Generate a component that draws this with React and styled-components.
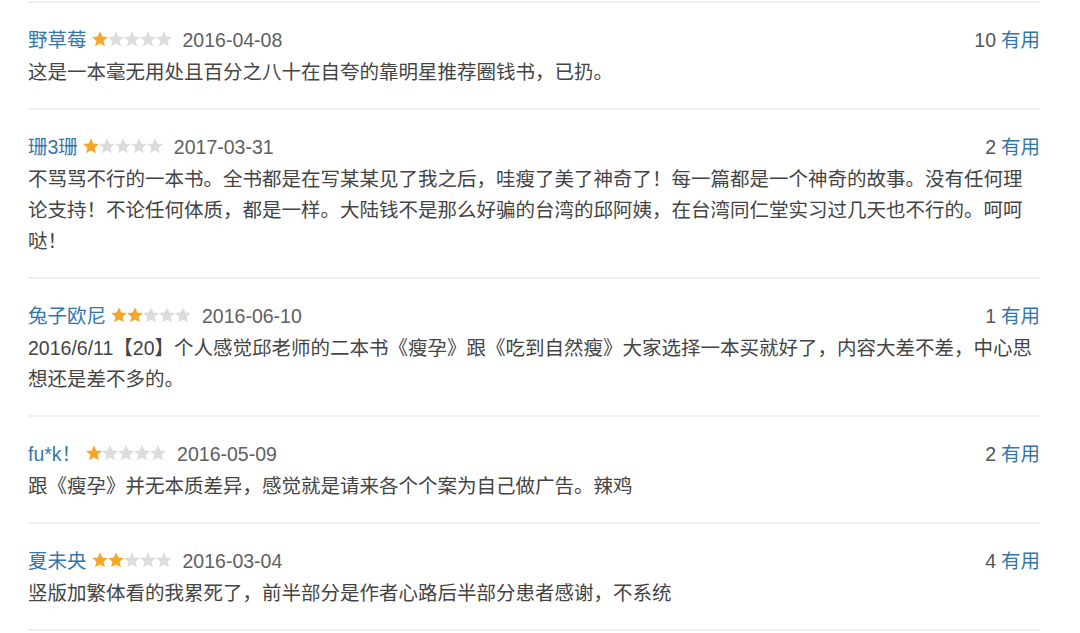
import React from "react";
import styled, { createGlobalStyle } from "styled-components";

const Global = createGlobalStyle`
  html, body { margin: 0; padding: 0; background: #fff; }
  body {
    font-family: "Liberation Sans", "Noto Sans CJK SC", Arial, sans-serif;
    -webkit-font-smoothing: antialiased;
  }
`;

const Page = styled.div`
  width: 1012px;
  padding: 1px 0 0 28px;
  font-size: 19.5px;
`;

const List = styled.div`
  border-top: 2px solid #f0f0f0;
`;

const Item = styled.div`
  padding: 23px 0 20px;
  border-bottom: 2px solid #f0f0f0;
`;

const Header = styled.div`
  display: flex;
  align-items: center;
  justify-content: space-between;
  height: 28px;
  line-height: 28px;
`;

const Meta = styled.div`
  display: flex;
  align-items: center;
`;

const Name = styled.span`
  color: #3377aa;
  margin-right: 5px;
`;

const Stars = styled.span`
  display: inline-flex;
  margin-right: 11px;
  margin-top: -2px;
`;

const DateText = styled.span`
  color: #606060;
`;

const Votes = styled.div`
  color: #555;
`;

const Useful = styled.span`
  color: #3377aa;
  margin-left: 5px;
`;

const Body = styled.p`
  margin: 3px 0 0;
  color: #444;
  line-height: 31px;
`;

const Star = ({ on }) => (
  <svg width="16" height="16" viewBox="0 0 16 16">
    <path
      d="M8 0.3 L10.23 5.53 L15.89 6.04 L11.61 9.77 L12.88 15.31 L8 12.4 L3.12 15.31 L4.39 9.77 L0.11 6.04 L5.77 5.53 Z"
      fill={on ? "#f9a52a" : "#dcdcdc"}
    />
  </svg>
);

const Rating = ({ value }) => (
  <Stars>
    {[1, 2, 3, 4, 5].map((i) => (
      <Star key={i} on={i <= value} />
    ))}
  </Stars>
);

const reviews = [
  {
    name: "野草莓",
    rating: 1,
    date: "2016-04-08",
    votes: 10,
    text: "这是一本毫无用处且百分之八十在自夸的靠明星推荐圈钱书，已扔。",
  },
  {
    name: "珊3珊",
    rating: 1,
    date: "2017-03-31",
    votes: 2,
    text: "不骂骂不行的一本书。全书都是在写某某见了我之后，哇瘦了美了神奇了！每一篇都是一个神奇的故事。没有任何理论支持！不论任何体质，都是一样。大陆钱不是那么好骗的台湾的邱阿姨，在台湾同仁堂实习过几天也不行的。呵呵哒！",
  },
  {
    name: "兔子欧尼",
    rating: 2,
    date: "2016-06-10",
    votes: 1,
    text: "2016/6/11【20】个人感觉邱老师的二本书《瘦孕》跟《吃到自然瘦》大家选择一本买就好了，内容大差不差，中心思想还是差不多的。",
  },
  {
    name: "fu*k！",
    rating: 1,
    date: "2016-05-09",
    votes: 2,
    text: "跟《瘦孕》并无本质差异，感觉就是请来各个个案为自己做广告。辣鸡",
  },
  {
    name: "夏未央",
    rating: 2,
    date: "2016-03-04",
    votes: 4,
    text: "竖版加繁体看的我累死了，前半部分是作者心路后半部分患者感谢，不系统",
  },
];

export default function App() {
  return (
    <>
      <Global />
      <Page>
        <List>
          {reviews.map((r) => (
            <Item key={r.name}>
              <Header>
                <Meta>
                  <Name>{r.name}</Name>
                  <Rating value={r.rating} />
                  <DateText>{r.date}</DateText>
                </Meta>
                <Votes>
                  {r.votes}
                  <Useful>有用</Useful>
                </Votes>
              </Header>
              <Body>{r.text}</Body>
            </Item>
          ))}
        </List>
      </Page>
    </>
  );
}
